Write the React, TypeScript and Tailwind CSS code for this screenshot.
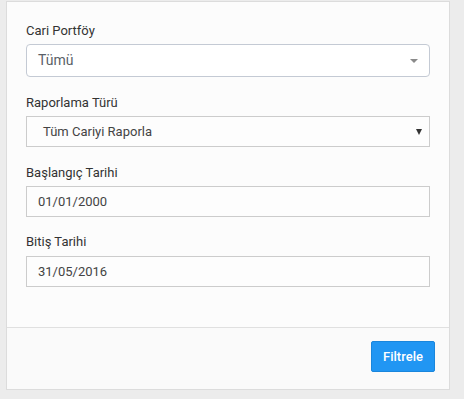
import React from "react";

function Label({ children, mb }: { children: React.ReactNode; mb: string }) {
  return (
    <div className={`h-[18px] text-[13px] leading-[18px] text-[#333] ${mb}`}>{children}</div>
  );
}

export default function App() {
  return (
    <div
      className="w-[464px] h-[399px] bg-[#ececec] pl-[6px] pt-[1px]"
      style={{ fontFamily: "Roboto, 'Liberation Sans', sans-serif" }}
    >
      <div className="w-[444px] h-[389px] border border-[#dcdcdc] bg-[#fcfcfc] flex flex-col">
        <div className="px-[19px] pt-[20px] pb-[40px] border-b border-[#e0e0e0]">
          <Label mb="mb-[4px]">Cari Portföy</Label>
          <div className="h-[33px] rounded-[4px] border border-[#c4cad4] bg-white flex items-center justify-between pl-[11px] pr-[11px] mb-[17px]">
            <span className="text-[14px] text-[#5a5f68]">Tümü</span>
            <svg width="8" height="4" viewBox="0 0 8 4" className="mt-[1px]">
              <path d="M0 0 L8 0 L4 4 Z" fill="#8a8a8a" />
            </svg>
          </div>

          <Label mb="mb-[4px]">Raporlama Türü</Label>
          <div className="h-[31px] border border-[#cccccc] bg-[#fdfdfd] flex items-center justify-between pl-[16px] pr-[7px] mb-[17px]">
            <span className="text-[13px] text-[#444]">Tüm Cariyi Raporla</span>
            <svg width="6" height="6" viewBox="0 0 6 6" className="mt-[1px]">
              <path d="M0 0 L6 0 L3 6 Z" fill="#333" />
            </svg>
          </div>

          <Label mb="mb-[4px]">Başlangıç Tarihi</Label>
          <div className="h-[31px] border border-[#cccccc] bg-[#fdfdfd] flex items-center pl-[11px] mb-[16px]">
            <span className="text-[13px] text-[#444]">01/01/2000</span>
          </div>

          <Label mb="mb-[5px]">Bitiş Tarihi</Label>
          <div className="h-[31px] border border-[#cccccc] bg-[#fdfdfd] flex items-center pl-[11px]">
            <span className="text-[13px] text-[#444]">31/05/2016</span>
          </div>
        </div>
        <div className="flex-1 bg-[#fafafa] flex justify-end items-start pt-[13px] pr-[14px]">
          <button className="w-[64px] h-[31px] rounded-[2px] bg-[#2196f3] border border-[#1a86dc] text-white text-[13px] font-medium">
            Filtrele
          </button>
        </div>
      </div>
    </div>
  );
}
